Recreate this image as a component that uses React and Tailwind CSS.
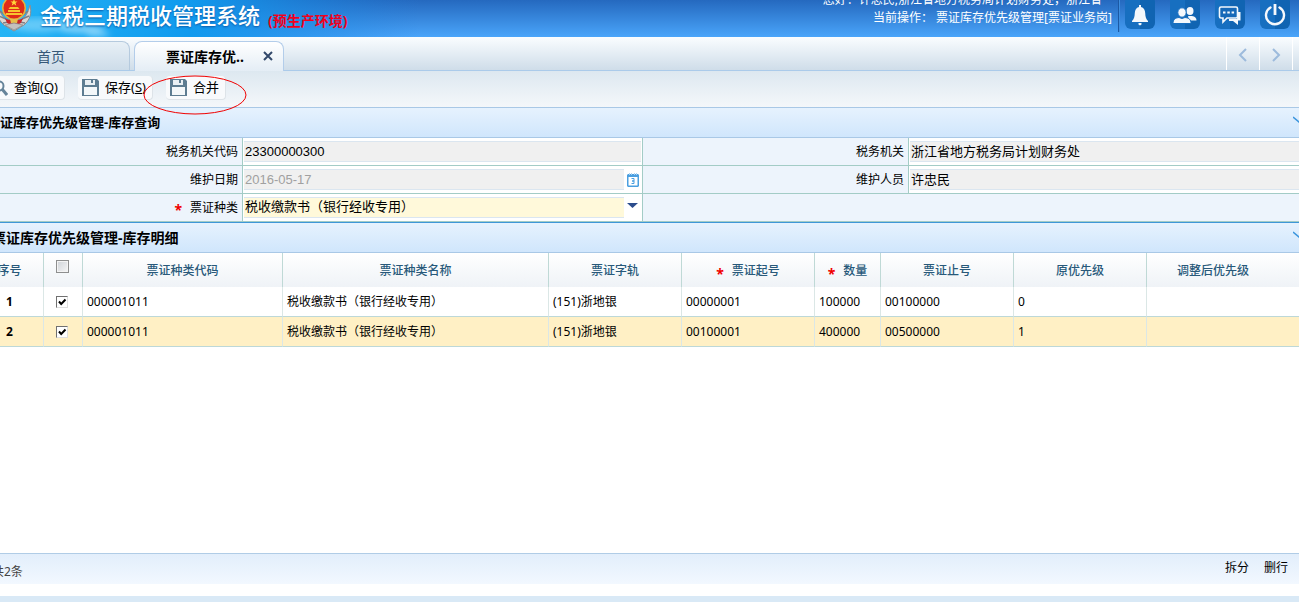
const rows = [
  { code: '000001011', name: '税收缴款书（银行经收专用）', prefix: '(151)浙地银', start: '00000001', count: '100000', end: '00100000', before: '0', after: '' },
  { code: '000001011', name: '税收缴款书（银行经收专用）', prefix: '(151)浙地银', start: '00100001', count: '400000', end: '00500000', before: '1', after: '' },
]

const columns = [
  { key: 'code', title: '票证种类代码', width: 'w-[200px]' },
  { key: 'name', title: '票证种类名称', width: 'w-[266px]' },
  { key: 'prefix', title: '票证字轨', width: 'w-[133px]' },
  { key: 'start', title: '票证起号', width: 'w-[133px]', required: true },
  { key: 'count', title: '数量', width: 'w-[66px]', required: true },
  { key: 'end', title: '票证止号', width: 'w-[133px]' },
  { key: 'before', title: '原优先级', width: 'w-[133px]' },
  { key: 'after', title: '调整后优先级', width: '' },
]

function Emblem() {
  return (
    <svg className="-ml-1 -mt-1 h-9 w-9 shrink-0" viewBox="0 0 36 36" aria-hidden="true">
      <path d="M2 9c-2 8 0 15 6 20l10 6 10-6c6-5 8-12 6-20-2 8-5 13-9 15H11C7 22 4 17 2 9z" fill="#dcd7d2" stroke="#8d8c8e" strokeWidth="1" />
      <path d="M4 15l5 4M3 20l7 3M7 27l6-1M32 15l-5 4M33 20l-7 3M29 27l-6-1" stroke="#7c7f88" strokeWidth="1.4" />
      <circle cx="18" cy="12" r="12" fill="#e5b33c" />
      <circle cx="18" cy="12" r="10.5" fill="#df2b18" />
      <path d="M18 3l1 2.500h2.500l-2 1.600.8 2.600-2.300-1.600-2.300 1.600.8-2.600-2-1.600H17z" fill="#ffd83a" />
      <path d="M10 17h16v2H10zM12 14h12v2H12zM14 11h8l1.500 2h-11z" fill="#f8c52e" />
      <path d="M9 22c3 3 15 3 18 0l-2 5c-3 2-11 2-14 0z" fill="#c9252b" />
      <path d="M14 23h8l-1 4h-6z" fill="#e6bd4c" />
      <path d="M9 29l9-2 9 2-9 5z" fill="#c4c0bd" stroke="#85868b" strokeWidth=".7" />
    </svg>
  )
}

function HeaderButton({ label, children }) {
  return (
    <button type="button" aria-label={label} className="-mt-1 flex h-[33px] w-[30px] items-center justify-center rounded-md bg-linear-to-r from-[#176fc0] from-50% to-[#1064b2] to-50% text-[#f4f8fc]">
      <svg className="mt-1 h-6 w-6" viewBox="0 0 24 24" fill="currentColor" aria-hidden="true">{children}</svg>
    </button>
  )
}

function Required() {
  return <span className="mr-2 inline-block h-3 align-middle text-sm leading-4 font-bold text-[#f00000]">*</span>
}

function SaveIcon() {
  return (
    <svg className="h-[17px] w-[17px] shrink-0" viewBox="0 0 17 17" aria-hidden="true">
      <path d="M0 0h15l2 2v15H0z" fill="#5d7c91" />
      <path d="M3 1h10v5H3z" fill="#e9eff3" />
      <path d="M9 1h2v3H9z" fill="#5d7c91" />
      <path d="M2 8h13v8H2z" fill="#f3f7f9" />
    </svg>
  )
}

function ToolButton({ className = '', icon, children }) {
  return (
    <button type="button" className={`flex h-6 items-center gap-1.5 rounded-sm border-r border-b border-[#dde3e8] bg-[#f8fafc] pr-1.5 pl-1 text-[13px] whitespace-nowrap text-black ${className}`}>
      {icon}
      <span>{children}</span>
    </button>
  )
}

function SectionTitle({ className = '', children }) {
  return (
    <div className="flex h-[30px] items-center justify-between overflow-hidden border-b border-[#a9c8e6] bg-linear-to-b from-[#e6f2fe] to-[#d0e6fc]">
      <h2 className={`font-bold whitespace-nowrap text-black ${className}`}>{children}</h2>
      <button type="button" aria-label="收起" className="-mr-1.5 mb-2 shrink-0">
        <svg className="h-3 w-3" viewBox="0 0 12 12" fill="none" stroke="#3c95dd" strokeWidth="1.600" aria-hidden="true">
          <path d="M0 4l6 5 6-5" />
        </svg>
      </button>
    </div>
  )
}

function Label({ htmlFor, required, children }) {
  return (
    <label htmlFor={htmlFor} className="flex items-center justify-end border-r border-b border-[#a3ccc6] bg-[#edf4fc] pr-1 text-xs text-black">
      {required && <Required />}
      {children}
    </label>
  )
}

const field = 'h-[21px] min-w-0 flex-1 appearance-none border-y border-[#dbe6f0] px-px text-[13px] outline-none'

function Check({ label, checked }) {
  return (
    <span className="relative block h-3 w-3">
      <input type="checkbox" aria-label={label} defaultChecked={checked} className="peer block h-3 w-3 appearance-none border border-t-[#707070] border-r-[#dedede] border-b-[#dedede] border-l-[#707070] bg-white" />
      <svg className="pointer-events-none absolute inset-0 hidden h-3 w-3 peer-checked:block" viewBox="0 0 12 12" fill="none" stroke="#000" strokeWidth="2" aria-hidden="true">
        <path d="M3 5.500l2.200 2.500L9.500 3.500" />
      </svg>
    </span>
  )
}

export default function App() {
  return (
    <div className="flex min-h-screen flex-col overflow-hidden bg-white font-['Noto_Sans','Noto_Sans_CJK_SC',sans-serif] text-xs text-black">
      <header className="relative flex h-[37px] justify-between overflow-hidden bg-linear-to-b from-[#2569bf] to-[#4aa5fa]">
        <svg className="absolute top-0 left-0 h-full w-[420px]" viewBox="0 0 420 37" preserveAspectRatio="none" aria-hidden="true">
          <defs>
            <linearGradient id="sky" x1="0" x2="1">
              <stop offset="0" stopColor="#24b4f5" />
              <stop offset=".45" stopColor="#109aee" />
              <stop offset="1" stopColor="#1c80de" stopOpacity="0" />
            </linearGradient>
            <filter id="soft"><feGaussianBlur stdDeviation="3" /></filter>
          </defs>
          <path d="M0 0h420v37H0z" fill="url(#sky)" />
          <g fill="#c9efff" filter="url(#soft)">
            <ellipse cx="40" cy="25" rx="30" ry="7" opacity=".4" />
            <ellipse cx="82" cy="29" rx="22" ry="4" opacity=".6" />
            <ellipse cx="98" cy="34" rx="12" ry="3" opacity=".5" />
          </g>
        </svg>
        <div className="relative flex items-start">
          <Emblem />
          <h1 className="ml-2 text-[22px] leading-[30px] font-medium whitespace-nowrap text-white text-shadow-[0_1px_2px_#0b5aa8]">金税三期税收管理系统</h1>
          <span className="mt-3 ml-2 text-sm leading-[18px] font-bold whitespace-nowrap text-[#f0001c]">(预生产环境)</span>
        </div>
        <div className="relative flex">
          <div className="-mt-[9px] text-right leading-[18px] whitespace-nowrap text-white">
            <p className="pr-2.5">您好：许忠民,浙江省地方税务局计划财务处，浙江省</p>
            <p>当前操作： 票证库存优先级管理[票证业务岗]</p>
          </div>
          <span className="mr-[5px] ml-1.5 h-8 w-0.5 border-r border-[#3d8ee0] bg-[#1b59a4]" />
          <div className="flex gap-[15px] pr-[9px]">
            <HeaderButton label="通知">
              <path d="M11 2h2v2c3 .7 4 3 4.200 6 .2 4 .8 6 2.800 8v1H4v-1c2-2 2.600-4 2.800-8C7 7 8 4.700 11 4z" />
              <path d="M10.500 20h3v1.500l-1.500 1-1.500-1z" />
            </HeaderButton>
            <HeaderButton label="用户">
              <ellipse cx="17" cy="8" rx="3.500" ry="4" />
              <path d="M15 13h4c3 .5 4.500 2 4.500 4.500H16z" />
              <g stroke="#176fc0" strokeWidth="1">
                <ellipse cx="9" cy="9.500" rx="4.200" ry="4.700" />
                <path d="M0 20.500c0-4 2-5.500 6-6l3 1 3-1c4 .5 6 2 6 6z" />
              </g>
            </HeaderButton>
            <HeaderButton label="消息">
              <path d="M20 9h2.500v8.500h-2.500v4.500l-5-4h-4v-2h8z" />
              <path d="M3 4h15c1 0 1.500.5 1.500 1.500v8c0 1-.5 1.500-1.500 1.500H9l-4 4v-4H3c-1 0-1.500-.5-1.500-1.500v-8C1.500 4.500 2 4 3 4z" fill="#1669b8" stroke="currentColor" strokeWidth="1.600" />
              <path d="M5 8.500h2.500v2H5zM9.300 8.500h2.500v2H9.300zM13.600 8.500h2.500v2h-2.500z" />
            </HeaderButton>
            <HeaderButton label="退出">
              <path d="M7.500 4.500A9 9 0 1 0 16.500 4.500" fill="none" stroke="currentColor" strokeWidth="2.400" strokeLinecap="round" />
              <path d="M10.600 1h2.800v11h-2.800z" />
            </HeaderButton>
          </div>
        </div>
      </header>

      <nav className="flex h-[34px] items-end justify-between border-b border-[#abcbea] bg-linear-to-b from-[#fafdff] to-[#cfdde9]">
        <div className="flex items-end gap-1">
          <a href="#home" className="flex h-[29px] w-[130px] items-center rounded-tr-lg border-t border-r border-[#b5cade] bg-linear-to-b from-[#e8f0f6] to-[#cddce9] pt-0.5 pl-[37px] text-sm text-[#365878]">首页</a>
          <div className="-mb-px flex h-[30px] w-[150px] items-center justify-between rounded-t-lg border border-b-0 border-[#b3cdea] bg-linear-to-b from-white to-[#e4edf5] pr-2.5 pl-[31px]">
            <a href="#stock" className="text-sm font-bold text-black">票证库存优..</a>
            <button type="button" aria-label="关闭" className="mb-0.5">
              <svg className="h-2.5 w-2.5" viewBox="0 0 10 10" stroke="#33496b" strokeWidth="2" aria-hidden="true">
                <path d="M1 1l8 8M9 1L1 9" />
              </svg>
            </button>
          </div>
        </div>
        <div className="flex h-full pr-1.5">
          <button type="button" aria-label="上一个" className="flex w-[33px] items-center justify-center border-l border-white">
            <svg className="mt-0.5 h-4 w-4" viewBox="0 0 16 16" fill="none" stroke="#9dbbdc" strokeWidth="2" aria-hidden="true"><path d="M11 2L5 8l6 6" /></svg>
          </button>
          <button type="button" aria-label="下一个" className="flex w-[34px] items-center justify-center border-x border-white">
            <svg className="mt-0.5 h-4 w-4" viewBox="0 0 16 16" fill="none" stroke="#9dbbdc" strokeWidth="2" aria-hidden="true"><path d="M5 2l6 6-6 6" /></svg>
          </button>
        </div>
      </nav>

      <div className="relative flex h-[37px] items-center gap-[13px] border-b border-[#a9c8e6] bg-linear-to-b from-[#dde8f0] to-[#f4f7fa] pb-0.5">
        <ToolButton
          className="-ml-3"
          icon={
            <svg className="h-4 w-4" viewBox="0 0 16 16" fill="none" stroke="#66849a" aria-hidden="true">
              <circle cx="7" cy="6" r="4.500" strokeWidth="2" />
              <path d="M10 9l5 6" strokeWidth="3" />
            </svg>
          }
        >
          查询(<u>Q</u>)
        </ToolButton>
        <ToolButton icon={<SaveIcon />}>保存(<u>S</u>)</ToolButton>
        <ToolButton icon={<SaveIcon />}>合并</ToolButton>
        <svg className="pointer-events-none absolute top-1 left-[143px] h-10 w-[104px]" viewBox="0 0 104 40" aria-hidden="true">
          <ellipse cx="52" cy="20" rx="51" ry="19" fill="none" stroke="#f00000" />
        </svg>
      </div>

      <section>
        <SectionTitle className="text-[13px]">证库存优先级管理-库存查询</SectionTitle>
        <form className="grid auto-rows-[28px] grid-cols-[243px_400px_266px_1fr]">
          <Label htmlFor="orgCode">税务机关代码</Label>
          <div className="flex items-center border-r border-b border-[#a3ccc6] px-px">
            <input id="orgCode" readOnly defaultValue="23300000300" className={`${field} bg-[#f0f0f0] font-['Liberation_Sans',sans-serif]`} />
          </div>
          <Label htmlFor="org">税务机关</Label>
          <div className="flex items-center border-b border-[#a3ccc6] pl-px">
            <input id="org" readOnly defaultValue="浙江省地方税务局计划财务处" className={`${field} bg-[#f0f0f0] pb-[3px]`} />
          </div>

          <Label htmlFor="date">维护日期</Label>
          <div className="flex items-center border-r border-b border-[#a3ccc6] pr-[3px] pl-px">
            <input id="date" disabled defaultValue="2016-05-17" className={`${field} bg-[#f0f0f0] font-['Liberation_Sans',sans-serif] text-[#a0a0a0]`} />
            <button type="button" aria-label="选择日期" className="ml-[3px]">
              <svg className="h-[14px] w-3" viewBox="0 0 12 14" aria-hidden="true">
                <path d="M1 1h10l1 1v11l-1 1H1l-1-1V2z" fill="#4b9fe0" />
                <path d="M2 0h1v2H2zM4 0h1v2H4zM7 0h1v2H7zM9 0h1v2H9z" fill="#a9d4f6" />
                <path d="M1.500 4h9v8.500h-9z" fill="#fff" />
                <path d="M4.500 5.500H7V8H5H7v2.500H4.500" fill="none" stroke="#4b9fe0" />
              </svg>
            </button>
          </div>
          <Label htmlFor="user">维护人员</Label>
          <div className="flex items-center border-b border-[#a3ccc6] pl-px">
            <input id="user" readOnly defaultValue="许忠民" className={`${field} bg-[#f0f0f0] pb-[3px]`} />
          </div>

          <Label htmlFor="kind" required>票证种类</Label>
          <div className="relative flex items-center border-r border-b border-[#a3ccc6] pr-[18px] pl-px">
            <select id="kind" className={`${field} rounded-none bg-[#fff9da] pb-0.5`}>
              <option>税收缴款书（银行经收专用）</option>
            </select>
            <svg className="pointer-events-none absolute top-[9px] right-1 h-[5px] w-[11px]" viewBox="0 0 11 5" aria-hidden="true">
              <path d="M0 0h11L5.500 5z" fill="#2b4c8c" />
            </svg>
          </div>
          <div className="col-span-2 border-b border-[#a3ccc6] bg-[#edf4fc]" />
        </form>
      </section>

      <section className="flex flex-1 flex-col border-t border-[#3e97d8]">
        <SectionTitle className="-ml-2 text-sm">票证库存优先级管理-库存明细</SectionTitle>
        <div className="flex-1 overflow-hidden">
          <table className="-ml-6 w-[calc(100%+24px)] table-fixed border-separate border-spacing-0">
            <thead>
              <tr className="h-[34px] bg-linear-to-b from-white to-[#eff3f7] text-[#28597a]">
                <th className="w-[68px] border-r border-[#bfd9d6] p-0 pt-0.5 font-medium">序号</th>
                <th className="w-[39px] border-r border-[#bfd9d6] p-0 pr-px">
                  <input type="checkbox" aria-label="全选" className="mx-auto -mt-2 block h-[13px] w-[13px] appearance-none border border-[#8e8f8f] bg-linear-to-br from-[#cfd3d8] to-[#f6f6f6] shadow-[inset_0_0_0_1px_#f4f4f4]" />
                </th>
                {columns.map(({ key, title, width, required }) => (
                  <th key={key} className={`border-r border-[#bfd9d6] p-0 pt-0.5 font-medium whitespace-nowrap last:border-r-0 last:pr-5 ${width}`}>
                    {required && <Required />}
                    {title}
                  </th>
                ))}
              </tr>
            </thead>
            <tbody>
              {rows.map((row, i) => (
                <tr key={row.start} className="h-[30px] even:bg-[#fff0c5]">
                  <td className="border-r border-b border-r-[#dbe7e6] border-b-[#bdd8d8] p-0 text-center font-bold">{i + 1}</td>
                  <td className="border-r border-b border-r-[#dbe7e6] border-b-[#bdd8d8] p-0 pl-3">
                    <Check label={`第${i + 1}行`} checked />
                  </td>
                  {columns.map(({ key }) => (
                    <td key={key} className="border-r border-b border-r-[#dbe7e6] border-b-[#bdd8d8] p-0 pl-1 whitespace-nowrap last:border-r-0">
                      {row[key]}
                    </td>
                  ))}
                </tr>
              ))}
            </tbody>
          </table>
        </div>
      </section>

      <footer className="mb-3 flex h-[31px] items-center justify-between border-t border-[#b0cce6] bg-linear-to-b from-[#e2eefb] to-[#f2f8ff]">
        <span className="-ml-2 pt-1.5 text-[#444]">共2条</span>
        <div className="flex gap-[15px] pr-[11px] pb-0.5">
          <button type="button">拆分</button>
          <button type="button">删行</button>
        </div>
      </footer>
      <div className="h-1.5 bg-[#d9e9f6]" />
    </div>
  )
}
